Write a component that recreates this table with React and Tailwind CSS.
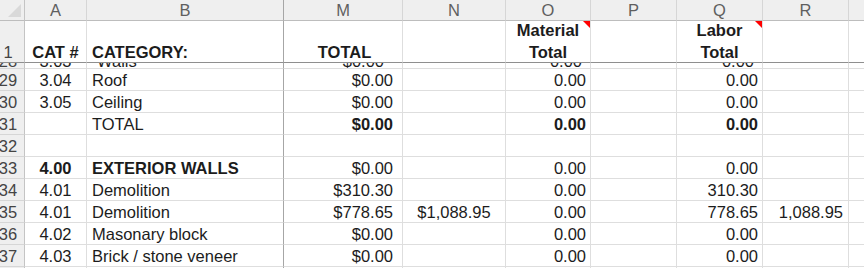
const COLS = 'grid grid-cols-[25px_62px_197px_119px_103px_85px_86px_86px_86px_1fr]';

// align per data column: A, B, M, N, O, P, Q, R, S
const ALIGN = [
  'justify-center',
  'justify-start pl-[5px] border-r-[#a6a6a6]',
  'justify-end pr-[9px]',
  'justify-center',
  'justify-end pr-[4px]',
  'justify-end pr-[4px]',
  'justify-end pr-[4px]',
  'justify-end pr-[5px]',
  'justify-start border-r-0',
];

const rows = [
  { n: 29, c: ['3.04', 'Roof', '$0.00', '', '0.00', '', '0.00', '', ''] },
  { n: 30, c: ['3.05', 'Ceiling', '$0.00', '', '0.00', '', '0.00', '', ''] },
  { n: 31, c: ['', 'TOTAL', '$0.00', '', '0.00', '', '0.00', '', ''], bold: [2, 4, 6] },
  { n: 32, c: ['', '', '', '', '', '', '', '', ''] },
  { n: 33, c: ['4.00', 'EXTERIOR WALLS', '$0.00', '', '0.00', '', '0.00', '', ''], bold: [0, 1] },
  { n: 34, c: ['4.01', 'Demolition', '$310.30', '', '0.00', '', '310.30', '', ''] },
  { n: 35, c: ['4.01', 'Demolition', '$778.65', '$1,088.95', '0.00', '', '778.65', '1,088.95', ''] },
  { n: 36, c: ['4.02', 'Masonary block', '$0.00', '', '0.00', '', '0.00', '', ''] },
  { n: 37, c: ['4.03', 'Brick / stone veneer', '$0.00', '', '0.00', '', '0.00', '', ''] },
  { n: 38, c: ['', '', '', '', '', '', '', '', ''] },
];

function RowNum({ children }) {
  return (
    <div className="flex items-center justify-center pr-[8px] bg-[#efefef] border-r border-b border-r-[#c4c4c4] border-b-[#d6d6d6] text-[#444] overflow-hidden">
      {children}
    </div>
  );
}

function DataRow({ row }) {
  return (
    <div className={`${COLS} grid-rows-[22px] h-[22px]`}>
      <RowNum>{row.n}</RowNum>
      {row.c.map((v, i) => (
        <div
          key={i}
          className={`flex items-center whitespace-nowrap overflow-hidden border-r border-b border-[#dedede] ${ALIGN[i]} ${row.bold && row.bold.includes(i) ? 'font-bold' : ''}`}
        >
          {v}
        </div>
      ))}
    </div>
  );
}

function CommentMark() {
  return (
    <svg className="absolute top-0 right-0" width="7" height="7" viewBox="0 0 7 7">
      <polygon points="0,0 7,0 7,7" fill="#ff0000" />
    </svg>
  );
}

export default function App() {
  const letters = ['A', 'B', 'M', 'N', 'O', 'P', 'Q', 'R', ''];
  const partial = ['3.03', 'Walls', '$0.00', '', '0.00', '', '0.00', '', ''];

  return (
    <div className="w-[864px] h-[268px] overflow-hidden bg-white text-[#1c1c1c] text-[16.5px] leading-[22px] font-['Liberation_Sans',Arial,sans-serif]">
      {/* column letters */}
      <div className={`${COLS} grid-rows-[21px] h-[21px] text-[#5f5f5f]`}>
        <div className="relative bg-[#efefef] border-r border-b border-r-[#c4c4c4] border-b-[#bdbdbd]">
          <svg className="absolute right-[3px] bottom-[3px]" width="13" height="13" viewBox="0 0 13 13">
            <polygon points="13,0 13,13 0,13" fill="#d9d9d9" />
          </svg>
        </div>
        {letters.map((l, i) => (
          <div
            key={i}
            className={`flex items-center justify-center bg-[#efefef] border-b border-b-[#bdbdbd] ${i === 8 ? '' : 'border-r'} ${i === 1 ? 'border-r-[#a6a6a6]' : 'border-r-[#d6d6d6]'}`}
          >
            {l}
          </div>
        ))}
      </div>

      {/* frozen header row 1 */}
      <div className={`${COLS} grid-rows-[42px] h-[42px] font-bold`}>
        <div className="flex items-end justify-center pr-[8px] bg-[#efefef] border-r border-r-[#c4c4c4] border-b border-b-[#8f8f8f] text-[#444] font-normal">
          <span className="mb-[-1px]">1</span>
        </div>
        <div className="flex items-end justify-center border-r border-r-[#dedede] border-b border-b-[#8f8f8f]">
          <span className="mb-[-1px]">CAT #</span>
        </div>
        <div className="flex items-end justify-start pl-[5px] border-r border-r-[#a6a6a6] border-b border-b-[#8f8f8f]">
          <span className="mb-[-1px]">CATEGORY:</span>
        </div>
        <div className="flex items-end justify-center border-r border-r-[#dedede] border-b border-b-[#8f8f8f]">
          <span className="mb-[-1px] ml-[3px]">TOTAL</span>
        </div>
        <div className="border-r border-r-[#dedede] border-b border-b-[#8f8f8f]" />
        <div className="relative flex flex-col items-center justify-end border-r border-r-[#dedede] border-b border-b-[#8f8f8f]">
          <span>Material</span>
          <span className="mb-[-1px]">Total</span>
          <CommentMark />
        </div>
        <div className="border-r border-r-[#dedede] border-b border-b-[#8f8f8f]" />
        <div className="relative flex flex-col items-center justify-end border-r border-r-[#dedede] border-b border-b-[#8f8f8f]">
          <span>Labor</span>
          <span className="mb-[-1px]">Total</span>
          <CommentMark />
        </div>
        <div className="border-r border-r-[#dedede] border-b border-b-[#8f8f8f]" />
        <div className="border-b border-b-[#8f8f8f]" />
      </div>

      {/* scrolled-off row 28, only its bottom shows */}
      <div className={`${COLS} grid-rows-[6px] h-[6px]`}>
        <div className="bg-[#efefef] border-r border-b border-r-[#c4c4c4] border-b-[#d6d6d6] text-[#444] overflow-hidden">
          <div className="h-[21px] mt-[-13px] flex items-center justify-center pr-[8px]">28</div>
        </div>
        {partial.map((v, i) => (
          <div key={i} className={`overflow-hidden border-r border-b border-[#dedede] ${ALIGN[i]}`}>
            <div className={`h-[21px] mt-[-13px] flex items-center whitespace-nowrap ${ALIGN[i]}`}>{v}</div>
          </div>
        ))}
      </div>

      {rows.map(r => (
        <DataRow key={r.n} row={r} />
      ))}
    </div>
  );
}
